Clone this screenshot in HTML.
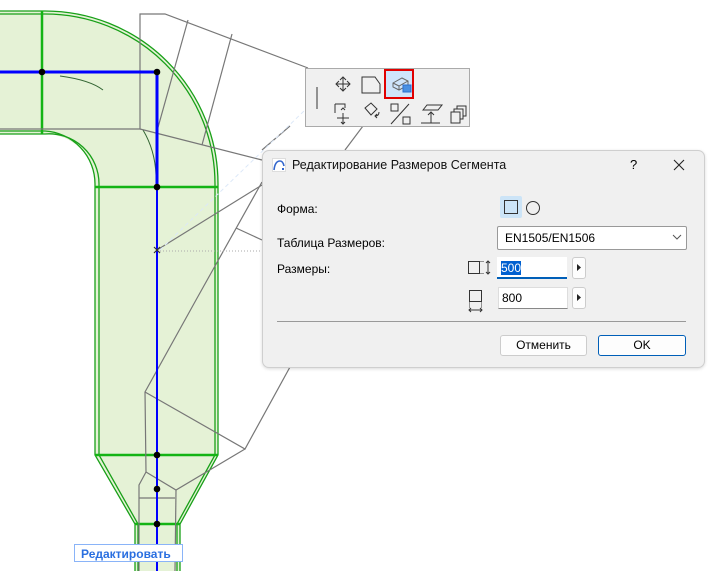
<!DOCTYPE html>
<html><head><meta charset="utf-8"><style>
body{margin:0;width:708px;height:571px;overflow:hidden;background:#fff;font-family:"Liberation Sans","Noto Sans CJK JP",sans-serif;position:relative}
.abs{position:absolute}
.t{font-size:12px;color:#000}
</style></head><body>
<svg class="abs" style="left:0;top:0" width="708" height="571" viewBox="0 0 708 571">
<!-- fill -->
<path d="M0,11 L45,11 A173,173 0 0 1 218,184 L218,455 L180,524 L180,571 L135,571 L135,524 L95,455 L95,184 A50,50 0 0 0 45,134 L0,134 Z" fill="#e5f2d6"/>
<g fill="none" stroke="#18a018" stroke-width="1.3">
<path d="M0,11 L45,11 A173,173 0 0 1 218,184 L218,455 L180,524 L180,571"/>
<path d="M0,14 L45,14 A170,170 0 0 1 215,184 L215,455 L177,524 L177,571"/>
<path d="M0,131 L45,131 A53,53 0 0 1 95,184 L95,455 L135,524 L135,571"/>
<path d="M0,134 L45,134 A50,50 0 0 1 99,184 L99,455 L138,524 L138,571"/>
</g>
<g stroke="#14b414" stroke-width="2.5">
<line x1="42" y1="11" x2="42" y2="134"/>
<line x1="95" y1="187" x2="218" y2="187"/>
<line x1="95" y1="455" x2="218" y2="455"/>
<line x1="135" y1="524" x2="180" y2="524"/>
</g>
<path d="M60,76 Q90,80 103,90" stroke="#336633" fill="none"/>
<path d="M143,130 Q155,150 156,175" stroke="#336633" fill="none"/>
<!-- gray lines -->
<g stroke="#777" stroke-width="1.2" fill="none">
<path d="M0,129 L140,129 L140,14 L165,14 L308,68"/>
<path d="M140,129 L148,131 L262,160"/>
<line x1="157" y1="131" x2="188" y2="20"/>
<line x1="202" y1="145" x2="232" y2="34"/>
<line x1="157" y1="250" x2="262" y2="185"/>
<line x1="262" y1="240" x2="236" y2="228"/>
<path d="M262,182 L196,300 L145,392 L146,472 L139,485 L139,571"/>
<path d="M145,392 L245,449 L290,367"/>
<path d="M146,472 L176,490 L245,449"/>
<path d="M176,490 L175,571"/>
<line x1="139" y1="498" x2="175" y2="498"/>
<line x1="290" y1="126" x2="262" y2="150"/>
<line x1="363" y1="126" x2="345" y2="150"/>
</g>
<line x1="160" y1="251" x2="262" y2="251" stroke="#aaa" stroke-dasharray="1,2"/>
<line x1="160" y1="250" x2="305" y2="110" stroke="#dce8f8" stroke-dasharray="4,3"/>
<!-- blue -->
<path d="M0,72 L157,72 L157,187" stroke="#0000ff" stroke-width="3" fill="none"/>
<line x1="157" y1="187" x2="157" y2="571" stroke="#0000ff" stroke-width="2"/>
<g fill="#000">
<circle cx="42" cy="72" r="3.3"/><circle cx="157" cy="72" r="3.3"/><circle cx="157" cy="187" r="3.3"/>
<circle cx="157" cy="455" r="3.3"/><circle cx="157" cy="489" r="3.3"/><circle cx="157" cy="524" r="3.3"/>
</g>
<path d="M154,247 L160,253 M160,247 L154,253" stroke="#333" stroke-width="1.2"/>
</svg>

<!-- toolbar -->
<div class="abs" style="left:305px;top:68px;width:163px;height:57px;background:#f0f0f0;border:1px solid #aaa"></div>
<div class="abs" style="left:384px;top:69px;width:26px;height:26px;border:2px solid #e00000;background:#cfe4fa"></div>
<svg class="abs" style="left:305px;top:68px" width="165" height="58" viewBox="0 0 165 58" fill="none" stroke="#333" stroke-width="1">
<line x1="12" y1="19" x2="12" y2="41"/>
<path d="M38,9 V23 M31,16 H45 M35,12 L38,9 L41,12 M35,20 L38,23 L41,20 M34,13 L31,16 L34,19 M42,13 L45,16 L42,19"/>
<path d="M57,9 H70 L75,16 V25 H57 Z"/>
<path d="M88,15 L97,10 L103,13 L103,17 L94,22 L88,19 Z M88,15 L94,18 L103,13 M94,18 V22" stroke="#666"/>
<rect x="98" y="17" width="8" height="7" fill="#4a90e2" stroke="#2a6fd0"/>
<path d="M30,36 V45 M30,36 H40 V40 M38,45 V56 M32,50 H44 M36,42 L38,40 L40,42 M36,54 L38,56 L40,54"/>
<path d="M60,40 L66,35 L72,41 L66,47 Z M70,48 Q74,48 74,44 M72,50 L70,48 L72,46"/>
<path d="M86,36 H93 V43 H86 Z M98,49 H105 V56 H98 Z M86,56 L104,36"/>
<path d="M118,42 L122,37 H137 L133,42 Z M116,55 H135 M126,55 V44 M123,47 L126,44 L129,47"/>
<path d="M146,44 H155 V55 H146 Z M149,44 V41 H158 V51 H155 M152,41 V38 H161 V48 H158"/>
</svg>

<!-- dialog -->
<div class="abs" style="left:262px;top:150px;width:441px;height:216px;background:#f0f0f0;border:1px solid #cfcfcf;border-radius:7px;box-shadow:0 1px 3px rgba(0,0,0,.15)"></div>
<svg class="abs" style="left:272px;top:158px" width="14" height="14" viewBox="0 0 14 14"><rect x="0.5" y="0.5" width="13" height="13" fill="#fff" stroke="#ddd"/><path d="M2,12 Q3,3 8,3 Q11,3 12,8" stroke="#3366cc" stroke-width="1.6" fill="none"/><rect x="10" y="10" width="2" height="2" fill="#3366cc"/></svg>
<div class="abs" style="left:292px;top:158px;font-size:12.5px;color:#111">Редактирование Размеров Сегмента</div>
<div class="abs" style="left:630px;top:157px;font-size:13px">?</div>
<svg class="abs" style="left:673px;top:159px" width="12" height="12"><path d="M1,1 L11,11 M11,1 L1,11" stroke="#222" stroke-width="1.1"/></svg>
<div class="abs t" style="left:277px;top:202px">Форма:</div>
<div class="abs t" style="left:277px;top:236px">Таблица Размеров:</div>
<div class="abs t" style="left:277px;top:262px">Размеры:</div>
<div class="abs" style="left:500px;top:196px;width:22px;height:22px;background:#cce4f7;border-radius:2px"></div>
<div class="abs" style="left:504px;top:200px;width:12px;height:12px;border:1px solid #333"></div>
<div class="abs" style="left:526px;top:201px;width:12px;height:12px;border:1px solid #333;border-radius:50%"></div>
<div class="abs" style="left:497px;top:226px;width:188px;height:22px;background:#fff;border:1px solid #999;border-radius:2px"></div>
<div class="abs t" style="left:505px;top:231px">EN1505/EN1506</div>
<svg class="abs" style="left:672px;top:234px" width="10" height="6"><path d="M1,1 L5,5 L9,1" stroke="#555" fill="none"/></svg>
<svg class="abs" style="left:467px;top:259px" width="28" height="54" fill="none" stroke="#333" stroke-width="1">
<rect x="1.5" y="2.5" width="11" height="12"/><path d="M12.5,2.5 H17 M12.5,14.5 H17" stroke-dasharray="1,1"/><path d="M21,2 V15 M19,4 L21,2 L23,4 M19,13 L21,15 L23,13"/>
<rect x="2.5" y="31.5" width="12" height="11"/><path d="M2.5,42.5 V49 M14.5,42.5 V49" stroke-dasharray="1,1"/><path d="M2,51 H15 M4,49 L2,51 L4,53 M13,49 L15,51 L13,53"/>
</svg>
<div class="abs" style="left:497px;top:257px;width:70px;height:20px;background:#fff;border-bottom:2px solid #005fb8"></div>
<div class="abs t" style="left:501px;top:261px;background:#0060d0;color:#fff;line-height:14px">500</div>
<div class="abs" style="left:498px;top:287px;width:68px;height:20px;background:#fff;border:1px solid #ddd;border-bottom-color:#888"></div>
<div class="abs t" style="left:502px;top:291px">800</div>
<div class="abs" style="left:572px;top:257px;width:12px;height:20px;background:#fdfdfd;border:1px solid #ccc;border-radius:3px"></div>
<div class="abs" style="left:572px;top:287px;width:12px;height:20px;background:#fdfdfd;border:1px solid #ccc;border-radius:3px"></div>
<svg class="abs" style="left:576px;top:263px" width="6" height="40"><path d="M1,1 L5,4.5 L1,8 Z M1,31 L5,34.5 L1,38 Z" fill="#222"/></svg>
<div class="abs" style="left:277px;top:321px;width:409px;height:1px;background:#999"></div>
<div class="abs" style="left:500px;top:335px;width:85px;height:19px;background:#fdfdfd;border:1px solid #ccc;border-radius:3px;text-align:center;line-height:19px;font-size:12px">Отменить</div>
<div class="abs" style="left:598px;top:335px;width:86px;height:19px;background:#fdfdfd;border:1px solid #005fb8;border-radius:3px;text-align:center;line-height:19px;font-size:12px">OK</div>

<div class="abs" style="left:74px;top:544px;width:109px;height:18px;background:#fff;border:1px solid #8ab4f8;color:#2a6fe0;font-weight:bold;font-size:12px;line-height:18px;padding-left:6px;box-sizing:border-box">Редактировать</div>
</body></html>
